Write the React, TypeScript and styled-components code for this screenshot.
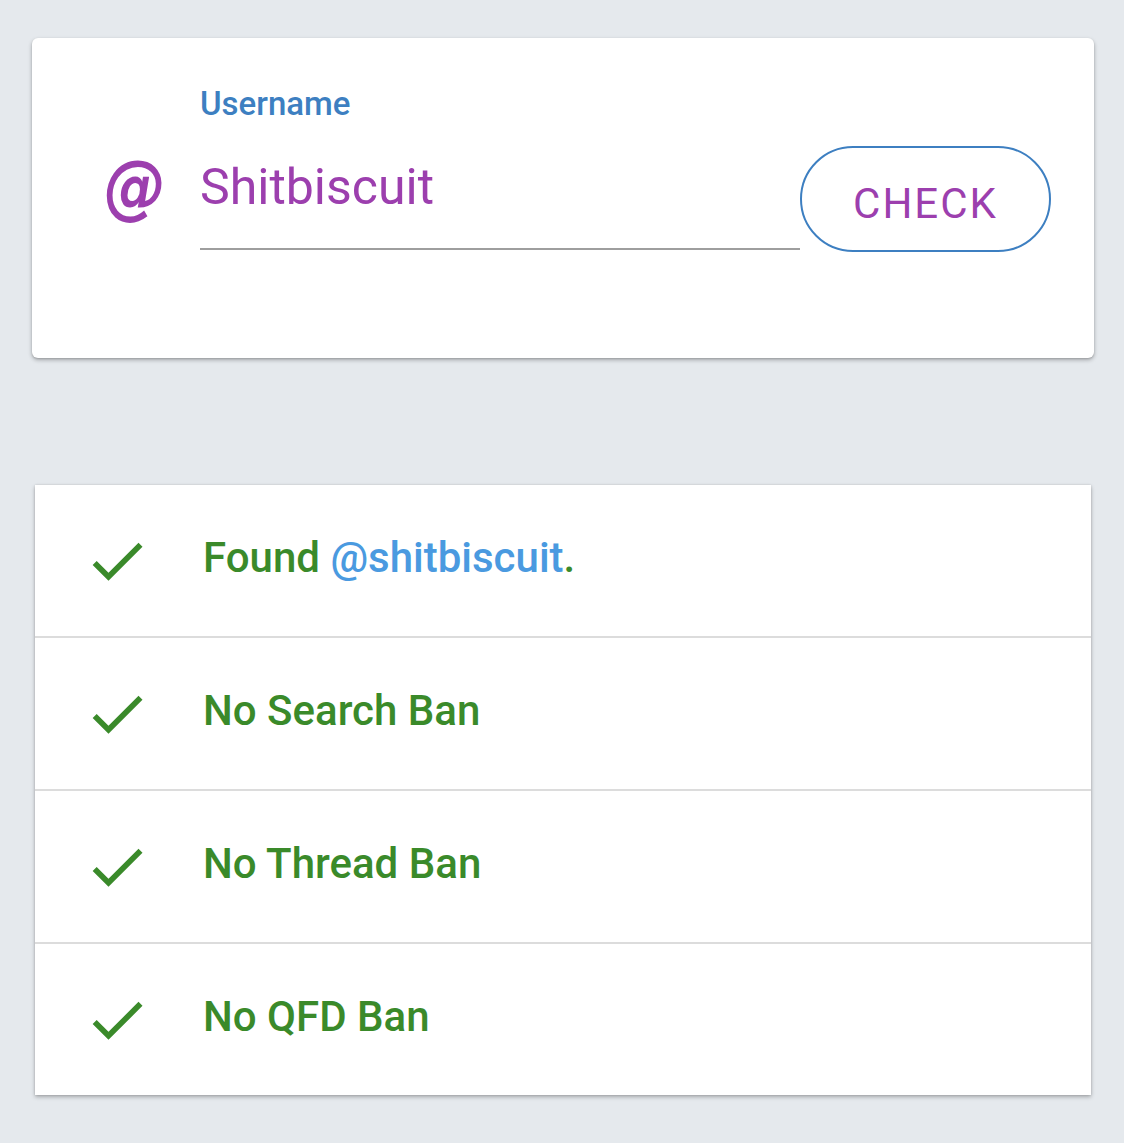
import React from "react";
import styled, { createGlobalStyle } from "styled-components";

const GlobalStyle = createGlobalStyle`
  body {
    margin: 0;
    background: #e5e9ed;
    font-family: Roboto, "Noto Sans", sans-serif;
  }
`;

const Page = styled.div`
  padding: 38px 30px 48px 32px;
  display: flex;
  flex-direction: column;
  gap: 127px;
`;

const SearchCard = styled.div`
  width: 1062px;
  height: 320px;
  box-sizing: border-box;
  background: #fff;
  border-radius: 6px;
  box-shadow: 0 2px 4px rgba(0, 0, 0, 0.28), 0 1px 2px rgba(0, 0, 0, 0.12);
  display: flex;
  align-items: flex-start;
  padding: 46px 43px 0 72px;
`;

const AtSign = styled.div`
  width: 96px;
  flex: none;
  margin-top: 67px;
  font-family: "DejaVu Sans", sans-serif;
  font-style: italic;
  font-weight: 700;
  font-size: 62px;
  line-height: 66px;
  color: #9c3fae;
  transform: scaleY(1.14);
  transform-origin: 0 14px;
`;

const Field = styled.div`
  width: 600px;
  flex: none;
  display: flex;
  flex-direction: column;
`;

const Label = styled.label`
  font-size: 33px;
  font-weight: 500;
  line-height: 40px;
  color: #3d7fc1;
`;

const Input = styled.div`
  margin-top: 33px;
  font-size: 50px;
  line-height: 60px;
  color: #9c3fae;
  padding-bottom: 31px;
  border-bottom: 2px solid #9e9e9e;
`;

const CheckButton = styled.button`
  margin-top: 62px;
  width: 251px;
  height: 106px;
  flex: none;
  background: #fff;
  border: 2.5px solid #3d7fc1;
  border-radius: 53px;
  padding: 8px 0 0;
  font-family: Roboto, sans-serif;
  font-size: 42px;
  letter-spacing: 2px;
  color: #9c3fae;
  cursor: pointer;
`;

const ResultCard = styled.div`
  margin-left: 3px;
  width: 1056px;
  background: #fff;
  box-shadow: 0 2px 4px rgba(0, 0, 0, 0.28), 0 0 2px rgba(0, 0, 0, 0.12);
  display: flex;
  flex-direction: column;
`;

const Row = styled.div`
  height: 151px;
  display: flex;
  align-items: center;
  gap: 52px;
  padding-left: 48px;
  & + & {
    border-top: 2px solid #dcdcdc;
  }
`;

const RowText = styled.span`
  font-size: 42px;
  font-weight: 500;
  color: #3a8a2a;
  margin-bottom: 6px;
`;

const Handle = styled.span`
  color: #4a9ae0;
`;

const CheckIcon = () => (
  <svg width="68" height="68" viewBox="0 0 24 24" fill="#3a8a2a">
    <path d="M9 16.17L4.83 12l-1.42 1.41L9 19 21 7l-1.41-1.41z" />
  </svg>
);

const results = [
  null,
  "No Search Ban",
  "No Thread Ban",
  "No QFD Ban",
];

export default function App() {
  return (
    <>
      <GlobalStyle />
      <Page>
        <SearchCard>
          <AtSign>@</AtSign>
          <Field>
            <Label>Username</Label>
            <Input>Shitbiscuit</Input>
          </Field>
          <CheckButton>CHECK</CheckButton>
        </SearchCard>
        <ResultCard>
          {results.map((text, i) => (
            <Row key={i}>
              <CheckIcon />
              <RowText>
                {text ?? (
                  <>
                    Found <Handle>@shitbiscuit</Handle>.
                  </>
                )}
              </RowText>
            </Row>
          ))}
        </ResultCard>
      </Page>
    </>
  );
}
